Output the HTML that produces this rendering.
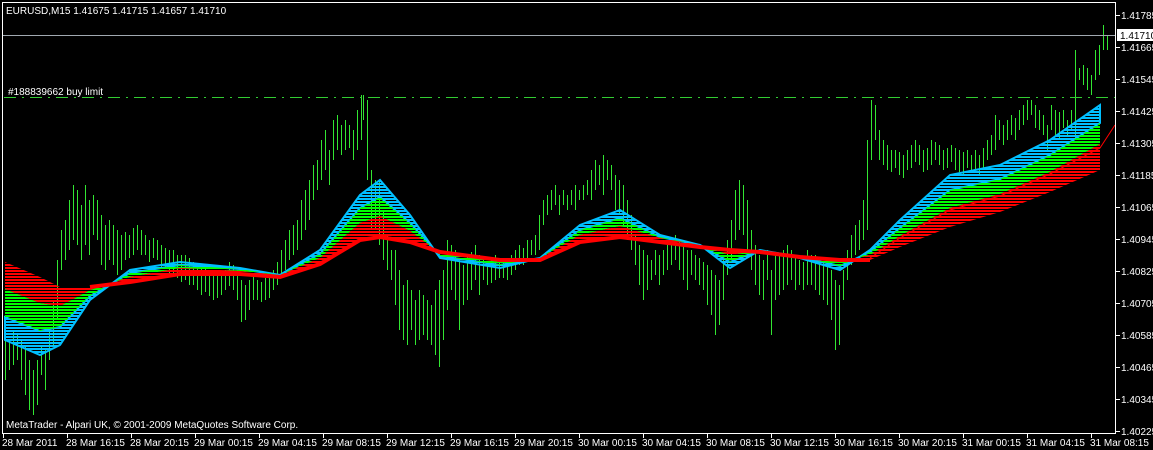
<!DOCTYPE html>
<html><head><meta charset="utf-8"><style>
html,body{margin:0;padding:0;background:#000;width:1153px;height:450px;overflow:hidden}
svg{display:block}
text{font-family:"Liberation Sans",sans-serif;font-size:10px;fill:#fff}
</style></head><body>
<svg width="1153" height="450" viewBox="0 0 1153 450" xmlns="http://www.w3.org/2000/svg" shape-rendering="crispEdges">
<defs>
<pattern id="pc" width="4" height="3" patternUnits="userSpaceOnUse"><rect width="4" height="2" fill="#00bfff"/></pattern>
<pattern id="pg" width="4" height="3" patternUnits="userSpaceOnUse"><rect width="4" height="2" fill="#00ff00"/></pattern>
<pattern id="pr" width="4" height="3" patternUnits="userSpaceOnUse"><rect width="4" height="2" fill="#ff0000"/></pattern>
</defs>
<rect width="1153" height="450" fill="#000"/>
<!-- bars -->
<path transform="translate(0.5,0)" fill="none" stroke="#32e632" stroke-width="1" d="
M5 330V380 M9 340V370 M13 330V365 M17 335V360 M21 340V380 M25 345V395 M29 360V410 M33 370V415 M37 360V405 M41 345V375 M45 350V390 M49 330V360 M53 300V345 M57 260V320 M61 230V270 M65 220V260 M69 200V250 M73 185V240 M77 190V245 M81 205V260 M85 185V245 M89 200V255 M93 195V235 M97 200V240 M101 215V265 M105 225V270 M109 220V260 M113 225V265 M117 230V275 M121 235V270 M125 232V260 M129 235V258 M133 228V255 M137 225V250 M141 230V255 M145 235V255 M149 240V262 M153 238V258 M157 240V260 M161 245V268 M165 248V268 M169 250V275 M173 250V275 M177 255V278 M181 255V282 M185 255V280 M189 258V285 M193 262V285 M197 265V290 M201 265V295 M205 268V292 M209 270V296 M213 272V300 M217 275V298 M221 272V295 M225 270V290 M229 262V286 M233 265V290 M237 270V300 M241 280V322 M245 285V320 M249 280V310 M253 275V300 M257 280V300 M261 282V302 M265 278V300 M269 275V298 M273 270V290 M277 262V285 M281 250V275 M285 240V270 M289 230V260 M293 225V255 M297 220V250 M301 200V240 M305 190V230 M309 180V220 M313 165V200 M317 160V190 M321 140V180 M325 130V170 M329 150V185 M333 120V160 M337 115V150 M341 125V155 M345 120V150 M349 125V148 M353 130V160 M357 110V150 M361 95V140 M363 95V120 M367 100V180 M371 170V230 M375 180V230 M379 180V245 M383 210V260 M387 235V270 M391 250V280 M395 250V305 M399 270V330 M403 285V340 M407 280V345 M411 290V330 M415 300V345 M419 290V340 M423 295V335 M427 300V340 M431 305V345 M435 290V355 M439 280V367 M443 270V340 M447 240V310 M451 245V290 M455 250V300 M459 260V330 M463 265V305 M467 255V300 M471 252V290 M475 245V280 M479 255V295 M483 260V280 M487 262V285 M491 258V283 M495 255V280 M499 260V278 M503 262V278 M507 265V280 M511 255V275 M515 250V270 M519 245V265 M523 248V265 M527 240V260 M531 240V255 M535 235V255 M539 215V250 M543 200V225 M547 195V215 M551 190V210 M555 185V205 M559 195V215 M563 190V205 M567 195V210 M571 190V205 M575 185V210 M579 190V200 M583 185V200 M587 180V195 M591 170V200 M595 160V190 M599 165V185 M603 155V195 M607 160V180 M611 165V190 M615 175V210 M619 180V215 M623 185V225 M627 200V240 M631 215V250 M635 235V265 M639 245V285 M643 250V300 M647 255V290 M651 260V280 M655 250V275 M659 255V285 M663 250V275 M667 245V270 M671 240V265 M675 235V260 M679 240V270 M683 245V280 M687 250V290 M691 250V275 M695 255V280 M699 258V285 M703 262V290 M707 265V305 M711 270V315 M715 275V335 M719 280V325 M723 260V300 M727 240V275 M731 220V260 M735 190V240 M739 180V230 M743 185V235 M747 200V250 M751 230V270 M755 245V285 M759 255V295 M763 260V300 M767 250V280 M771 270V335 M775 255V300 M779 255V295 M783 250V290 M787 245V285 M791 250V280 M795 255V290 M799 260V285 M803 262V290 M807 250V285 M811 255V285 M815 255V290 M819 260V295 M823 262V300 M827 265V305 M831 270V320 M835 280V350 M839 285V345 M843 270V300 M847 250V280 M851 235V265 M855 225V255 M859 220V250 M863 200V240 M867 140V230 M871 100V160 M875 105V140 M879 130V160 M883 140V165 M887 145V170 M891 150V172 M895 150V168 M899 152V175 M903 155V178 M907 150V170 M911 145V168 M915 140V162 M919 145V165 M923 150V172 M927 148V170 M931 140V165 M935 142V160 M939 145V165 M943 150V170 M947 148V168 M951 145V162 M955 148V170 M959 150V172 M963 152V175 M967 150V168 M971 155V172 M975 150V170 M979 155V175 M983 148V168 M987 140V160 M991 135V155 M995 115V150 M999 120V140 M1003 125V145 M1007 120V140 M1011 115V135 M1015 118V140 M1019 110V130 M1023 105V125 M1027 100V120 M1031 100V115 M1035 105V128 M1039 110V130 M1043 115V135 M1047 125V150 M1051 105V130 M1055 110V135 M1059 112V140 M1063 110V128 M1067 120V135 M1071 110V130 M1075 50V140 M1079 68V80 M1083 65V85 M1087 68V90 M1091 75V95 M1095 50V80 M1099 45V75 M1103 25V50 M1107 35V50"/>
<!-- ribbon -->
<g shape-rendering="auto">
<polygon fill="url(#pc)" stroke="#00bfff" stroke-width="2" points="5,340 40,355 60,345 90,300 130,270 180,262 240,268 280,275 320,250 360,195 380,180 410,215 440,258 500,268 540,258 580,225 620,210 660,235 700,245 730,268 760,250 800,258 840,270 870,250 900,220 950,175 1000,165 1050,140 1100,105 1100,123 1050,155 1000,179 950,190 900,228 870,252 840,266 800,257 760,250 730,262 700,245 660,237 620,218 580,230 540,258 500,265 440,256 410,223 380,197 360,208 320,254 280,275 240,269 180,265 130,273 90,296 60,327 40,331 5,317"/>
<polygon fill="url(#pg)" points="5,317 40,331 60,327 90,296 130,273 180,265 240,269 280,275 320,254 360,208 380,197 410,223 440,256 500,265 540,258 580,230 620,218 660,237 700,245 730,262 760,250 800,257 840,266 870,252 900,228 950,190 1000,179 1050,155 1100,123 1100,144 1050,172 1000,194 950,208 900,236 870,255 840,262 800,256 760,250 730,255 700,245 660,238 620,226 580,235 540,258 500,262 440,253 410,231 380,216 360,223 320,258 280,275 240,271 180,268 130,277 90,290 60,306 40,303 5,289"/>
<polygon fill="url(#pr)" points="5,289 40,303 60,306 90,290 130,277 180,268 240,271 280,275 320,258 360,223 380,216 410,231 440,253 500,262 540,258 580,235 620,226 660,238 700,245 730,255 760,250 800,256 840,262 870,255 900,236 950,208 1000,194 1050,172 1100,144 1100,170 1050,192 1000,212 950,227 900,247 870,260 840,260 800,257 760,252 730,250 700,247 660,242 620,237 580,242 540,260 500,260 440,252 410,242 380,237 360,240 320,264 280,277 240,274 180,274 130,282 90,287 60,287 40,277 5,262"/>
<polyline fill="none" stroke="#ff0000" stroke-width="4" points="90,287 130,282 180,274 240,274 280,277 320,264 360,240 380,237 410,242 440,252 500,260 540,260 580,242 620,237 660,242 700,247 730,250 760,252 800,257 840,260 870,260"/>
<polyline fill="none" stroke="#ff0000" stroke-width="1" points="870,258 900,238 950,210 1000,196 1050,174 1100,148 1115,125"/>
</g>
<!-- lines -->
<line x1="3" y1="35.5" x2="1115" y2="35.5" stroke="#a0a8b0"/>
<line x1="4" y1="97.5" x2="1115" y2="97.5" stroke="#32cd32" stroke-dasharray="12,6,2,6"/>
<text x="8" y="95">#188839662 buy limit</text>
<text x="6" y="14">EURUSD,M15  1.41675 1.41715 1.41657 1.41710</text>
<text x="6" y="428">MetaTrader - Alpari UK, © 2001-2009 MetaQuotes Software Corp.</text>
<!-- frame -->
<rect x="2.5" y="2.5" width="1113" height="431" fill="none" stroke="#fff"/>
<g stroke="#fff">
<path d="M1116 15.5h4M1116 47.5h4M1116 79.5h4M1116 111.5h4M1116 143.5h4M1116 175.5h4M1116 207.5h4M1116 239.5h4M1116 271.5h4M1116 303.5h4M1116 335.5h4M1116 367.5h4M1116 399.5h4M1116 431.5h4"/>
<path d="M3.5 434v4M67.5 434v4M131.5 434v4M195.5 434v4M259.5 434v4M323.5 434v4M387.5 434v4M451.5 434v4M515.5 434v4M579.5 434v4M643.5 434v4M707.5 434v4M771.5 434v4M835.5 434v4M899.5 434v4M963.5 434v4M1027.5 434v4M1091.5 434v4"/>
</g>
<g>
<text x="1121" y="19">1.41785</text>
<text x="1121" y="51">1.41665</text>
<text x="1121" y="83">1.41545</text>
<text x="1121" y="115">1.41425</text>
<text x="1121" y="147">1.41305</text>
<text x="1121" y="179">1.41185</text>
<text x="1121" y="211">1.41065</text>
<text x="1121" y="243">1.40945</text>
<text x="1121" y="275">1.40825</text>
<text x="1121" y="307">1.40705</text>
<text x="1121" y="339">1.40585</text>
<text x="1121" y="371">1.40465</text>
<text x="1121" y="403">1.40345</text>
<text x="1121" y="435">1.40225</text>
<rect x="1117" y="29" width="36" height="12" fill="#fff"/>
<text x="1120" y="39" style="fill:#000">1.41710</text>
</g>
<g>
<text x="2" y="446">28 Mar 2011</text>
<text x="66" y="446">28 Mar 16:15</text>
<text x="130" y="446">28 Mar 20:15</text>
<text x="194" y="446">29 Mar 00:15</text>
<text x="258" y="446">29 Mar 04:15</text>
<text x="322" y="446">29 Mar 08:15</text>
<text x="386" y="446">29 Mar 12:15</text>
<text x="450" y="446">29 Mar 16:15</text>
<text x="514" y="446">29 Mar 20:15</text>
<text x="578" y="446">30 Mar 00:15</text>
<text x="642" y="446">30 Mar 04:15</text>
<text x="706" y="446">30 Mar 08:15</text>
<text x="770" y="446">30 Mar 12:15</text>
<text x="834" y="446">30 Mar 16:15</text>
<text x="898" y="446">30 Mar 20:15</text>
<text x="962" y="446">31 Mar 00:15</text>
<text x="1026" y="446">31 Mar 04:15</text>
<text x="1090" y="446">31 Mar 08:15</text>
</g>
</svg>
</body></html>
